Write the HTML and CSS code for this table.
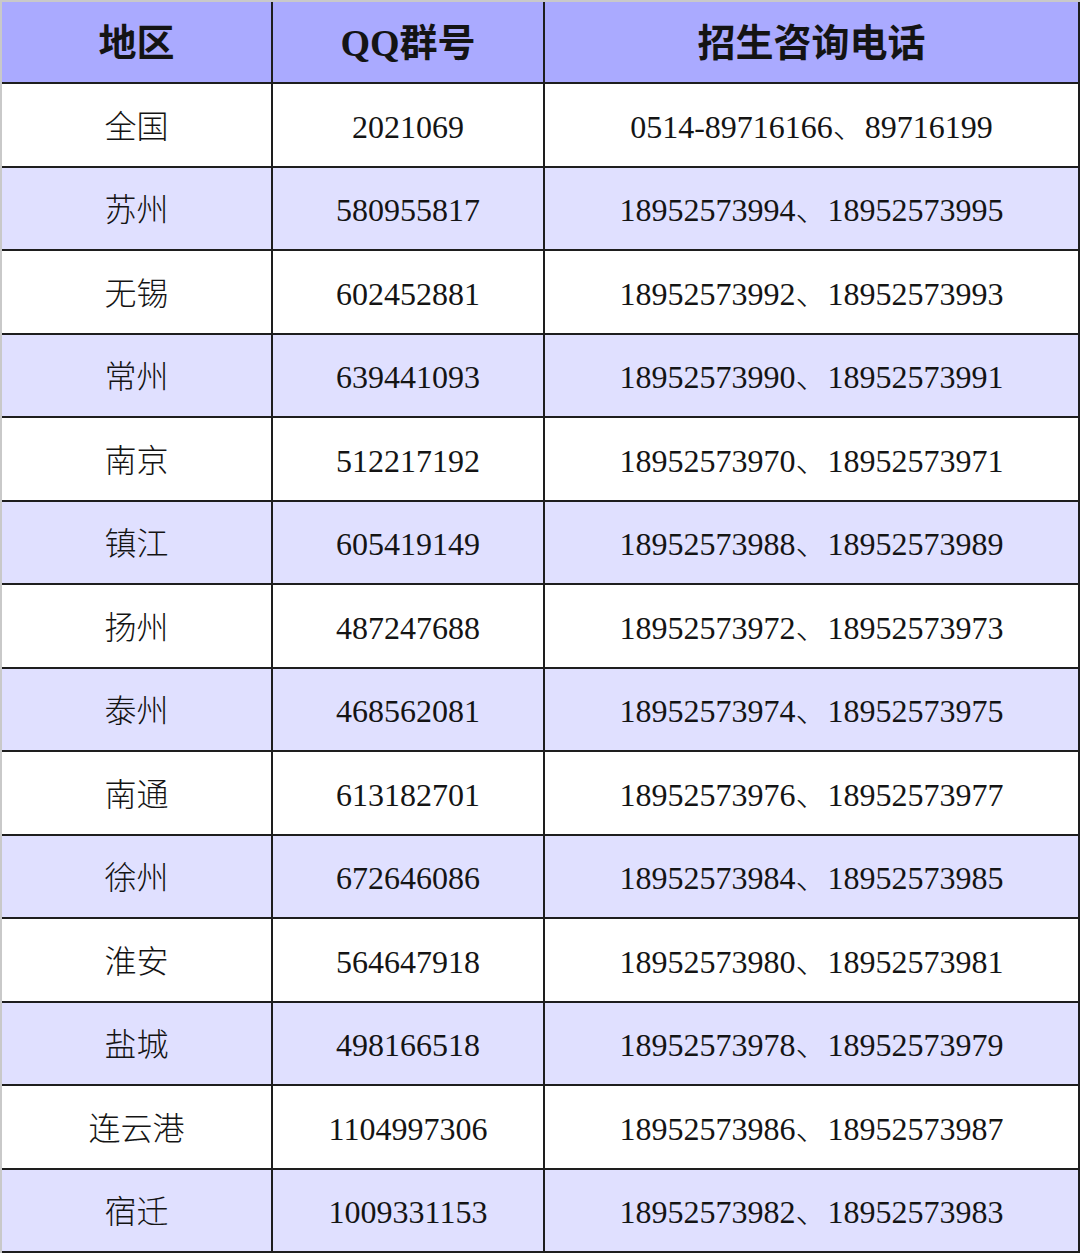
FILE: index.html
```html
<!DOCTYPE html>
<html lang="zh-CN">
<head>
<meta charset="utf-8">
<title>招生咨询</title>
<link rel="stylesheet" href="styles.css">
</head>
<body>
<table class="contacts">
  <colgroup>
    <col class="c-area">
    <col class="c-qq">
    <col class="c-tel">
  </colgroup>
  <thead>
    <tr class="head-row">
      <th>地区</th>
      <th>QQ群号</th>
      <th>招生咨询电话</th>
    </tr>
  </thead>
  <tbody>
    <tr><td>全国</td><td>2021069</td><td>0514-89716166、89716199</td></tr>
    <tr class="alt"><td>苏州</td><td>580955817</td><td>18952573994、18952573995</td></tr>
    <tr><td>无锡</td><td>602452881</td><td>18952573992、18952573993</td></tr>
    <tr class="alt"><td>常州</td><td>639441093</td><td>18952573990、18952573991</td></tr>
    <tr><td>南京</td><td>512217192</td><td>18952573970、18952573971</td></tr>
    <tr class="alt"><td>镇江</td><td>605419149</td><td>18952573988、18952573989</td></tr>
    <tr><td>扬州</td><td>487247688</td><td>18952573972、18952573973</td></tr>
    <tr class="alt"><td>泰州</td><td>468562081</td><td>18952573974、18952573975</td></tr>
    <tr><td>南通</td><td>613182701</td><td>18952573976、18952573977</td></tr>
    <tr class="alt"><td>徐州</td><td>672646086</td><td>18952573984、18952573985</td></tr>
    <tr><td>淮安</td><td>564647918</td><td>18952573980、18952573981</td></tr>
    <tr class="alt"><td>盐城</td><td>498166518</td><td>18952573978、18952573979</td></tr>
    <tr><td>连云港</td><td>1104997306</td><td>18952573986、18952573987</td></tr>
    <tr class="alt"><td>宿迁</td><td>1009331153</td><td>18952573982、18952573983</td></tr>
  </tbody>
</table>
</body>
</html>
```
FILE: styles.css
```css
html, body {
  margin: 0;
  padding: 0;
  background: #ffffff;
}

.contacts {
  width: 1080px;
  table-layout: fixed;
  border-collapse: separate;
  border-spacing: 0;
  border-top: 2px solid #c9c9c9;
  border-left: 2px solid #c9c9c9;
  font-family: "Liberation Serif", "Noto Sans CJK SC", serif;
  color: #141414;
}

.c-area { width: 271px; }
.c-qq { width: 272px; }
.c-tel { width: auto; }

.contacts th,
.contacts td {
  padding: 0;
  text-align: center;
  vertical-align: middle;
  border-right: 2px solid #1e1e1e;
  border-bottom: 2px solid #1e1e1e;
  line-height: 40px;
}

.contacts tbody tr {
  height: 83.5px;
}

.head-row {
  height: 82px;
  background: #aaaaff;
}

.contacts th {
  font-size: 38px;
  font-weight: 700;
  padding-top: 2px;
}

.contacts td {
  font-size: 32px;
  font-weight: 300;
  padding-top: 4px;
}

.alt {
  background: #e0e0ff;
}
```
